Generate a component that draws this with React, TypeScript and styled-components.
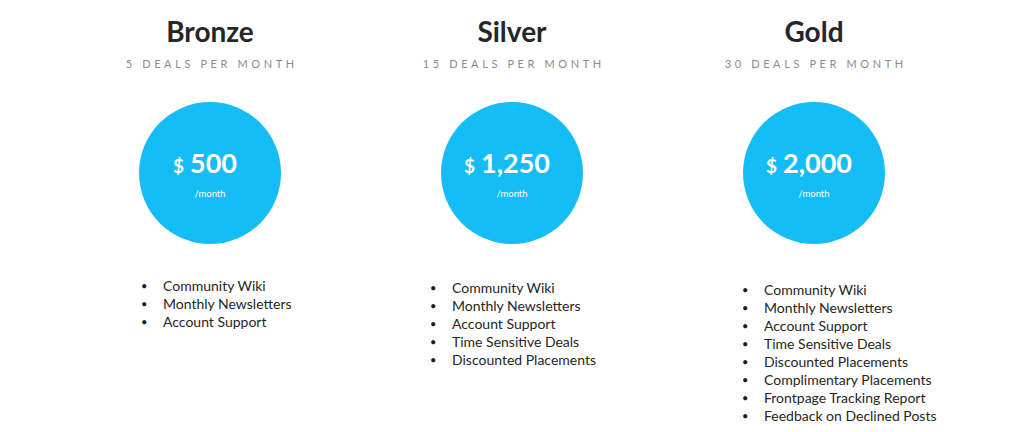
import React from 'react';
import styled, { createGlobalStyle } from 'styled-components';

interface Plan {
  name: string;
  deals: string;
  price: string;
  indent: number;
  listTop: number;
  features: string[];
}

const plans: Plan[] = [
  {
    name: 'Bronze',
    deals: '5 DEALS PER MONTH',
    price: '500',
    indent: 82,
    listTop: 33,
    features: ['Community Wiki', 'Monthly Newsletters', 'Account Support'],
  },
  {
    name: 'Silver',
    deals: '15 DEALS PER MONTH',
    price: '1,250',
    indent: 69,
    listTop: 35,
    features: [
      'Community Wiki',
      'Monthly Newsletters',
      'Account Support',
      'Time Sensitive Deals',
      'Discounted Placements',
    ],
  },
  {
    name: 'Gold',
    deals: '30 DEALS PER MONTH',
    price: '2,000',
    indent: 79,
    listTop: 37,
    features: [
      'Community Wiki',
      'Monthly Newsletters',
      'Account Support',
      'Time Sensitive Deals',
      'Discounted Placements',
      'Complimentary Placements',
      'Frontpage Tracking Report',
      'Feedback on Declined Posts',
    ],
  },
];

const GlobalStyle = createGlobalStyle`
  html, body {
    margin: 0;
    padding: 0;
    background: #ffffff;
  }
  body {
    font-family: Lato, "Open Sans", sans-serif;
    color: #262626;
  }
`;

const Page = styled.div`
  width: 1024px;
  height: 432px;
  overflow: hidden;
  display: grid;
  grid-template-columns: repeat(3, 302px);
  padding-left: 59px;
  box-sizing: border-box;
`;

const Column = styled.div`
  display: flex;
  flex-direction: column;
  align-items: center;
  padding-top: 14px;
`;

const Title = styled.h2`
  margin: 0;
  font-size: 28px;
  line-height: 34px;
  font-weight: 700;
  color: #262626;
`;

const Deals = styled.div`
  margin-top: 9px;
  font-size: 11px;
  line-height: 13px;
  letter-spacing: 3.6px;
  color: #8c8c8c;
  padding-left: 3.6px;
`;

const Circle = styled.div`
  margin-top: 32px;
  width: 142px;
  height: 142px;
  border-radius: 50%;
  background: #14bdf6;
  color: #ffffff;
  display: flex;
  flex-direction: column;
  align-items: center;
  padding-top: 46px;
  box-sizing: border-box;
`;

const PriceRow = styled.div`
  display: flex;
  align-items: baseline;
  gap: 6px;
  font-weight: 700;
  padding-right: 10px;
`;

const Dollar = styled.span`
  font-size: 19px;
  line-height: 30px;
`;

const Amount = styled.span`
  font-size: 27px;
  line-height: 30px;
`;

const Per = styled.div`
  margin-top: 7px;
  font-size: 9.5px;
  line-height: 11px;
`;

const List = styled.ul<{ $indent: number; $top: number }>`
  list-style: none;
  margin: ${(p) => p.$top}px 0 0;
  padding: 0 0 0 ${(p) => p.$indent}px;
  align-self: stretch;
`;

const Item = styled.li`
  display: flex;
  font-size: 14px;
  line-height: 18px;
  color: #262626;
`;

const Bullet = styled.span`
  width: 22px;
  flex: none;
  font-size: 11px;
  color: #1a1a1a;
`;

export default function App() {
  return (
    <>
      <GlobalStyle />
      <Page>
        {plans.map((plan) => (
          <Column key={plan.name}>
            <Title>{plan.name}</Title>
            <Deals>{plan.deals}</Deals>
            <Circle>
              <PriceRow>
                <Dollar>$</Dollar>
                <Amount>{plan.price}</Amount>
              </PriceRow>
              <Per>/month</Per>
            </Circle>
            <List $indent={plan.indent} $top={plan.listTop}>
              {plan.features.map((f) => (
                <Item key={f}>
                  <Bullet>•</Bullet>
                  {f}
                </Item>
              ))}
            </List>
          </Column>
        ))}
      </Page>
    </>
  );
}
